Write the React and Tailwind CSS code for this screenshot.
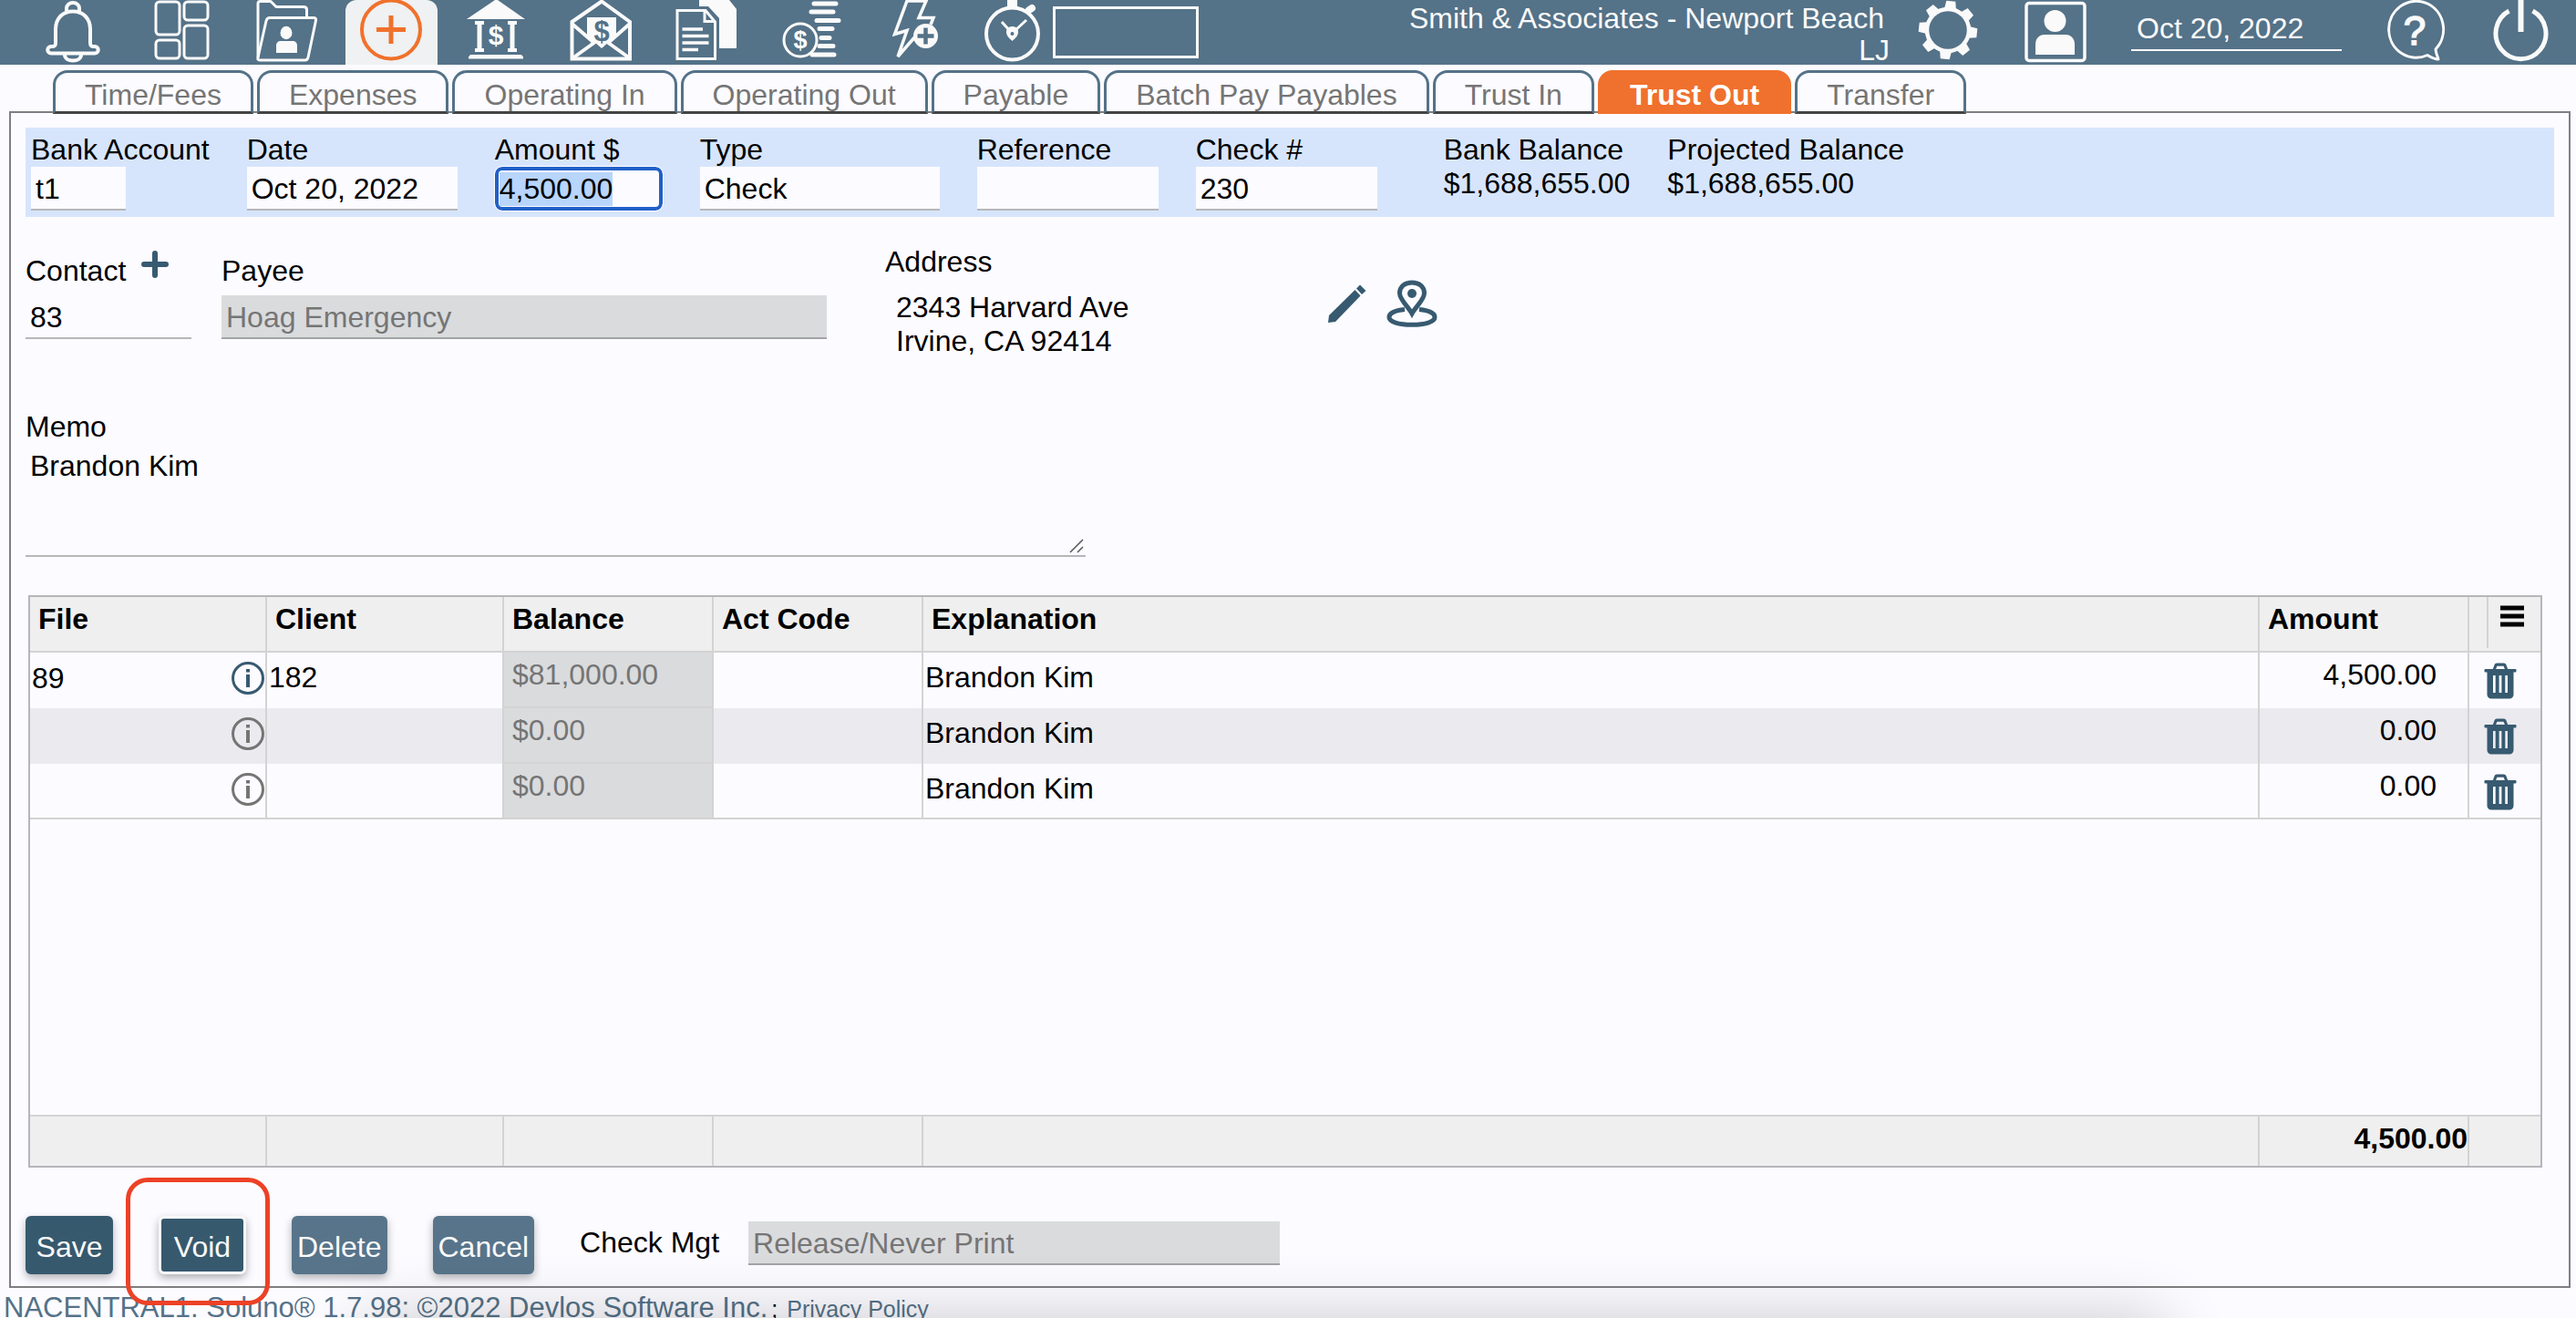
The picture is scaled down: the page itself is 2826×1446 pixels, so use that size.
import { useEffect, useRef, useState } from 'react';
import clsx from 'clsx';

const TABS = [
  'Time/Fees',
  'Expenses',
  'Operating In',
  'Operating Out',
  'Payable',
  'Batch Pay Payables',
  'Trust In',
  'Trust Out',
  'Transfer',
];

const ROWS = [
  { id: 1, file: '89', client: '182', balance: '$81,000.00', explanation: 'Brandon Kim', amount: '4,500.00' },
  { id: 2, file: '', client: '', balance: '$0.00', explanation: 'Brandon Kim', amount: '0.00' },
  { id: 3, file: '', client: '', balance: '$0.00', explanation: 'Brandon Kim', amount: '0.00' },
];

const fieldClass =
  'block h-12 appearance-none rounded-none border-b-2 border-[#b7b7ba] bg-[#fcfbff] pl-[5px] pt-0.5 leading-[37px] outline-none';
const disabledClass =
  'block h-12 appearance-none rounded-none border-b-2 border-[#a3a4a6] bg-[#dadbdd] pl-[5px] pt-0.5 leading-[37px] text-[#757575] outline-none disabled:opacity-100';
const cellInputClass = 'block w-full min-w-0 bg-transparent pl-0.5 leading-[37px] outline-none';

/* ---------- toolbar icons ---------- */

function BellIcon() {
  return (
    <svg viewBox="0 0 101 71" className="w-full h-full" fill="none" stroke="currentColor" strokeWidth="4" strokeLinecap="round" strokeLinejoin="round">
      <path d="M39 12V9a7 6 0 0 1 14 0v3" />
      <path d="M27 47V32C27 20 35 12.500 46 12.500S65 20 65 32V47c0 3 1 4 4 4h1a3.700 3.700 0 0 1 0 7.500H22a3.700 3.700 0 0 1 0-7.500h1c3 0 4-1 4-4z" />
      <path d="M37 60c0 4 4 6.500 9 6.500s9-2.500 9-6.500" />
    </svg>
  );
}

function DashboardIcon() {
  return (
    <svg viewBox="0 0 101 71" className="w-full h-full" fill="none" stroke="currentColor" strokeWidth="3">
      <rect x="22" y="2" width="26" height="36" rx="4" />
      <rect x="53" y="2" width="26" height="20" rx="4" />
      <rect x="22" y="44" width="26" height="20" rx="4" />
      <rect x="53" y="28" width="26" height="36" rx="4" />
    </svg>
  );
}

function ContactsFolderIcon() {
  return (
    <svg viewBox="0 0 101 71" className="w-full h-full" fill="none" stroke="currentColor" strokeWidth="3" strokeLinejoin="round">
      <path d="M19 63V4c0-1.500 1-2.500 2.500-2.500H33l6 6h30c2 0 3.500 1 3.500 3V18" />
      <path d="M32 19.500h48c2 0 3 1 2.500 3L74 63c-.4 2-1.500 3-3.500 3H21c-2 0-2.500-1-2-3l9-40c.5-2.300 1.700-3.500 4-3.500z" />
      <ellipse cx="50" cy="36" rx="6.500" ry="7.200" fill="currentColor" stroke="none" />
      <path d="M39 58v-8c0-3 2-5 5-5h13c3 0 5 2 5 5v8z" fill="currentColor" stroke="none" />
    </svg>
  );
}

function AddIcon() {
  return (
    <svg viewBox="0 0 101 71" className="w-full h-full" fill="none" stroke="#f0712c" strokeWidth="4">
      <circle cx="50" cy="32.500" r="32" />
      <path d="M34 32.500h32M50 17v31" strokeWidth="5" />
    </svg>
  );
}

function BankIcon() {
  return (
    <svg viewBox="0 0 101 71" className="w-full h-full" fill="currentColor">
      <path d="M50.500 -1L82 21H18z" />
      <path d="M22 60h56l2 2.500v2H20v-2z" />
      <path d="M27 23h10v4h-2.500v26H37v4H27v-4h2.500V27H27zM63 23h10v4h-2.500v26H73v4H63v-4h2.500V27H63z" />
      <text x="50" y="49" textAnchor="middle" fontSize="30" fontWeight="700">$</text>
    </svg>
  );
}

function EnvelopeIcon() {
  return (
    <svg viewBox="0 0 101 71" className="w-full h-full" fill="none" stroke="currentColor" strokeWidth="4">
      <path d="M18.500 24L51 1.500 82 24v40.500H18.500z" />
      <path d="M18.500 26L44 48M82 26L57 48M19 64l25-18M82 64L57 46" />
      <path d="M35 19h32v20L51 53 35 39z" fill="currentColor" stroke="none" />
      <text x="51" y="45" textAnchor="middle" fontSize="31" fontWeight="700" fill="#547288" stroke="none">$</text>
    </svg>
  );
}

function DocumentsIcon() {
  return (
    <svg viewBox="0 0 101 71" className="w-full h-full" fill="none" stroke="currentColor" strokeWidth="3">
      <path d="M43 0h33l8 10v43H65V20L53 7H43z" fill="currentColor" stroke="none" />
      <path d="M19 11.500h31L60.500 24v40.500H19z" />
      <path d="M49 12v11.500h12" />
      <path d="M24.500 32H47M24.500 39.500h29M24.500 47h29M24.500 54.500H42" strokeWidth="3.500" />
    </svg>
  );
}

function CoinsIcon() {
  return (
    <svg viewBox="0 0 101 71" className="w-full h-full" fill="none" stroke="currentColor" strokeWidth="5" strokeLinecap="round">
      <path d="M54 4h24M51 13h24M57 22.500h24M60 31.500h14M62 41.500h9M60 50.500h15M52 60h24" />
      <circle cx="39" cy="44" r="18" strokeWidth="3" fill="#547288" />
      <text x="39" y="53" textAnchor="middle" fontSize="27" fontWeight="700" fill="currentColor" stroke="none">$</text>
    </svg>
  );
}

function BoltPlusIcon() {
  return (
    <svg viewBox="0 0 101 71" className="w-full h-full" fill="none" stroke="currentColor" strokeWidth="3.500">
      <path d="M67 27l3-7.500H54L62 1H41L27.500 37.500 41 33.500 31 62l20-23" strokeLinejoin="miter" />
      <circle cx="61.500" cy="39.500" r="13.500" fill="currentColor" stroke="none" />
      <path d="M61.500 30.500v18M52.500 39.500h18" stroke="#547288" strokeWidth="4.500" />
    </svg>
  );
}

function StopwatchIcon() {
  return (
    <svg viewBox="0 0 86 71" className="w-full h-full" fill="none" stroke="currentColor" strokeWidth="4">
      <circle cx="41.500" cy="37" r="28.500" />
      <path d="M36 0h11v8H36z" fill="currentColor" stroke="none" />
      <path d="M60 11l3-2" strokeWidth="8" strokeLinecap="round" />
      <path d="M39 34l-9-10M44 34l13-12" strokeWidth="3" />
      <path d="M35 35c0-4 3-6 6.500-6s6.500 2 6.500 6-3 7-6.500 10C38 42 35 39 35 35z" fill="currentColor" stroke="none" />
      <circle cx="41.500" cy="37" r="2" fill="#547288" stroke="none" />
    </svg>
  );
}

function GearIcon() {
  return (
    <svg viewBox="0 0 72 71" className="w-[72px] h-full" fill="none" stroke="currentColor">
      <circle cx="36" cy="33" r="23" strokeWidth="4.500" />
      <g fill="currentColor" stroke="none">
        {[6, 51, 96, 141, 186, 231, 276, 321].map((angle) => (
          <path key={angle} d="M31 1h10l1.500 9h-13z" transform={`rotate(${angle} 36 33)`} />
        ))}
      </g>
    </svg>
  );
}

function ProfileIcon() {
  return (
    <svg viewBox="0 0 69 71" className="w-[69px] h-full" fill="none" stroke="currentColor" strokeWidth="3.500">
      <rect x="2" y="3.500" width="64" height="63" rx="3" />
      <circle cx="33.500" cy="23" r="12" fill="currentColor" stroke="none" />
      <path d="M12 60V49c0-7 4-11 10-11h23c6 0 10 4 10 11v11z" fill="currentColor" stroke="none" />
    </svg>
  );
}

function HelpIcon() {
  return (
    <svg viewBox="0 0 66 71" className="w-[66px] h-full" fill="none" stroke="currentColor" strokeWidth="3">
      <path d="M46 60.500A30 31 0 1 1 55 54c0 4 2 7 3 11-5 0-8-2-12-4.500z" strokeLinejoin="round" />
      <text x="32" y="49" textAnchor="middle" fontSize="44" fill="currentColor" strokeWidth="1.500">?</text>
    </svg>
  );
}

function PowerIcon() {
  return (
    <svg viewBox="0 0 68 71" className="w-[68px] h-full" fill="none" stroke="currentColor" strokeWidth="5">
      <path d="M21.500 12a27.500 28 0 1 0 26 0" />
      <path d="M34.500 0v35" strokeWidth="6" />
    </svg>
  );
}

/* ---------- form icons ---------- */

function InfoIcon() {
  return (
    <svg viewBox="0 0 38 38" className="size-[38px]" fill="none" stroke="currentColor" strokeWidth="3">
      <circle cx="19" cy="19" r="16.500" />
      <path d="M19 15v14M19 9v3.500" strokeWidth="4" />
    </svg>
  );
}

function TrashIcon() {
  return (
    <svg viewBox="0 0 36 40" className="w-9 h-10" fill="currentColor">
      <path d="M9.500 8l2-5.500c.4-1.200 1.400-2 2.800-2h7.400c1.400 0 2.400.8 2.800 2l2 5.500h-3.200L21.600 3.700h-7.200L12.700 8z" />
      <rect x="0.500" y="7" width="35" height="3.500" rx="1" />
      <path fillRule="evenodd" d="M3.500 10h29v25a4.500 4.500 0 0 1-4.500 4.500H8A4.500 4.500 0 0 1 3.500 35zM10 14v19h2.700V14zm6.600 0v19h2.800V14zm6.700 0v19H26V14z" />
    </svg>
  );
}

function PencilIcon() {
  return (
    <svg viewBox="0 0 42 42" className="size-[42px]" fill="currentColor">
      <path d="M29.500 6l6 6.500L8 41l-8 1 1-8z" />
      <path d="M31 4.500L35 .5l6.500 6.500-4.500 4z" />
    </svg>
  );
}

function MapPinIcon() {
  return (
    <svg viewBox="0 0 56 52" className="w-14 h-[52px]" fill="none" stroke="currentColor" strokeWidth="5">
      <path d="M20 32.500C9.500 33.500 3 36.500 3 41c0 5 10.500 8.300 25 8.300S53 46 53 41c0-4.500-6.500-7.500-17-8.500" />
      <path d="M28 37C23 28 14.500 22 14.500 14.500 14.500 7.500 20 3 28 3s13.500 4.500 13.500 11.500C41.500 22 33 28 28 37z" />
      <circle cx="28" cy="15" r="5" fill="currentColor" stroke="none" />
    </svg>
  );
}

const TOOLBAR = [
  { name: 'Notifications', icon: BellIcon },
  { name: 'Dashboard', icon: DashboardIcon },
  { name: 'Contacts', icon: ContactsFolderIcon },
  { name: 'New entry', icon: AddIcon, active: true },
  { name: 'Banking', icon: BankIcon },
  { name: 'Billing', icon: EnvelopeIcon },
  { name: 'Documents', icon: DocumentsIcon },
  { name: 'Payments', icon: CoinsIcon },
  { name: 'Quick add', icon: BoltPlusIcon },
];

function Header() {
  return (
    <header className="flex h-[71px] shrink-0 items-stretch bg-[#547288] pl-[34px] pr-[27px] text-[#fafafa]">
      <nav className="flex gap-3.5">
        {TOOLBAR.map((item) => (
          <button
            key={item.name}
            aria-label={item.name}
            className={clsx('w-[101px]', item.active && 'rounded-t-xl bg-[#eff1f2]')}
          >
            <item.icon />
          </button>
        ))}
        <button aria-label="Timer" className="w-[86px]">
          <StopwatchIcon />
        </button>
      </nav>
      <input aria-label="Timer value" className="mt-[7px] h-[57px] w-40 border-3 border-[#fafafa] bg-transparent px-2 outline-none" />

      <div className="ml-auto flex gap-12">
        <div className="flex gap-7">
          <div className="pt-[3px] text-right leading-[35px]">
            <p className="pr-1.5">Smith &amp; Associates - Newport Beach</p>
            <p>LJ</p>
          </div>
          <button aria-label="Settings"><GearIcon /></button>
        </div>
        <button aria-label="Profile"><ProfileIcon /></button>
        <input
          aria-label="Working date"
          defaultValue="Oct 20, 2022"
          className="h-14 w-[231px] border-b-2 border-[#fafafa] bg-transparent pl-1.5 pt-2 outline-none"
        />
        <button aria-label="Help"><HelpIcon /></button>
        <button aria-label="Log out"><PowerIcon /></button>
      </div>
    </header>
  );
}

function Tabs({ active, onChange }) {
  return (
    <div role="tablist" className="relative z-10 -mb-[3px] flex gap-1 pl-[58px] pt-1.5">
      {TABS.map((tab) => (
        <button
          key={tab}
          role="tab"
          aria-selected={tab === active}
          onClick={() => onChange(tab)}
          className={clsx(
            'h-12 rounded-t-2xl border-3 px-8 pt-1.5 leading-[37px]',
            tab === active
              ? 'border-[#f0702d] bg-[#f0702d] font-bold text-white'
              : 'border-[#547288] border-b-[#444444] bg-[#fcfbff] text-[#757575]'
          )}
        >
          {tab}
        </button>
      ))}
    </div>
  );
}

function PaymentBar() {
  const amountRef = useRef(null);

  useEffect(() => {
    amountRef.current.focus();
    amountRef.current.select();
  }, []);

  return (
    <div className="flex gap-[41px] bg-[#d7e5fc] pb-[7px] pl-1.5 pt-1.5 leading-[37px]">
      <div>
        <label htmlFor="bank" className="block">Bank Account</label>
        <input id="bank" defaultValue="t1" className={clsx(fieldClass, 'w-[104px]')} />
      </div>
      <div>
        <label htmlFor="date" className="block">Date</label>
        <input id="date" defaultValue="Oct 20, 2022" className={clsx(fieldClass, 'w-[231px]')} />
      </div>
      <div>
        <label htmlFor="amount" className="block">Amount $</label>
        <input
          id="amount"
          ref={amountRef}
          defaultValue="4,500.00"
          className="block h-12 w-[184px] rounded-lg border-4 border-[#2160c8] bg-[#fcfbff] pl-px leading-[37px] outline-1 outline-white selection:bg-[#b8d5fb] selection:text-black"
        />
      </div>
      <div>
        <label htmlFor="type" className="block">Type</label>
        <select id="type" className={clsx(fieldClass, 'w-[263px]')}>
          <option>Check</option>
        </select>
      </div>
      <div>
        <label htmlFor="reference" className="block">Reference</label>
        <input id="reference" className={clsx(fieldClass, 'w-[199px]')} />
      </div>
      <div>
        <label htmlFor="check-no" className="block">Check #</label>
        <input id="check-no" defaultValue="230" className={clsx(fieldClass, 'w-[199px]')} />
      </div>
      <div className="ml-8">
        <p>Bank Balance</p>
        <p>$1,688,655.00</p>
      </div>
      <div>
        <p>Projected Balance</p>
        <p>$1,688,655.00</p>
      </div>
    </div>
  );
}

function PayeeSection() {
  return (
    <div className="mt-[31px] flex leading-[37px]">
      <div className="mr-[33px] w-[182px] pt-2.5">
        <div className="flex">
          <label htmlFor="contact">Contact</label>
          <button aria-label="Add contact" className="-mt-1 ml-[17px] self-start text-[#375a70]">
            <svg viewBox="0 0 30 30" className="size-[30px]" stroke="currentColor" strokeWidth="6" strokeLinecap="round">
              <path d="M15 3v24M3 15h24" />
            </svg>
          </button>
        </div>
        <input id="contact" defaultValue="83" className={clsx(fieldClass, 'mt-2 w-full')} />
      </div>
      <div className="mr-16 w-[664px] pt-2.5">
        <label htmlFor="payee" className="block">Payee</label>
        <input id="payee" disabled defaultValue="Hoag Emergency" className={clsx(disabledClass, 'mt-2 w-full')} />
      </div>
      <div className="w-[486px]">
        <p>Address</p>
        <address className="mt-[13px] pl-3 not-italic">
          2343 Harvard Ave
          <br />
          Irvine, CA 92414
        </address>
      </div>
      <div className="flex items-center gap-[22px] self-start pt-[38px] text-[#375a70]">
        <button aria-label="Edit address"><PencilIcon /></button>
        <button aria-label="Show on map"><MapPinIcon /></button>
      </div>
    </div>
  );
}

function Memo() {
  return (
    <div className="mt-[57px] leading-[37px]">
      <label htmlFor="memo" className="block">Memo</label>
      <div className="relative w-[1163px]">
        <textarea
          id="memo"
          defaultValue="Brandon Kim"
          className="block h-[124px] w-full resize-none border-b-2 border-[#b7b7ba] bg-transparent pl-[5px] pt-1.5 outline-none"
        />
        <svg viewBox="0 0 16 16" className="absolute bottom-1 right-0.5 size-4" stroke="#555" strokeWidth="1.500">
          <path d="M1 15L15 1M9 15l6-6" />
        </svg>
      </div>
    </div>
  );
}

function AllocationTable() {
  const [rows, setRows] = useState(ROWS);
  const line = 'border-r-2 border-[#d3d3d3]';

  return (
    <div className="ml-[3px] mr-[13px] mt-[42px] border-2 border-[#b6b6ba]">
      <table className="w-full table-fixed border-separate border-spacing-0 leading-[37px]">
        <colgroup>
          <col className="w-[260px]" />
          <col className="w-[260px]" />
          <col className="w-[230px]" />
          <col className="w-[230px]" />
          <col />
          <col className="w-[230px]" />
          <col className="w-[78px]" />
        </colgroup>
        <thead>
          <tr className="h-[61px] bg-[#efefef] text-left align-top">
            {['File', 'Client', 'Balance', 'Act Code', 'Explanation', 'Amount'].map((head) => (
              <th key={head} className="border-b-2 border-r-2 border-[#d3d3d3] px-[9px] pt-1.5">{head}</th>
            ))}
            <th className="border-b-2 border-[#d3d3d3] pl-[19px]">
              <button aria-label="Columns" className="flex h-14 items-start border-l-2 border-[#d3d3d3] pl-3 pt-[9px]">
                <svg viewBox="0 0 28 24" className="h-6 w-7">
                  <path d="M1 3h26M1 12h26M1 21h26" stroke="black" strokeWidth="5" />
                </svg>
              </button>
            </th>
          </tr>
        </thead>
        <tbody>
          {rows.map((row, index) => {
            const bottom = index === rows.length - 1 && 'border-b-2';
            return (
              <tr key={row.id} className={clsx('h-[61px] align-top', index % 2 === 1 && 'bg-[#ebeaee]')}>
                <td className={clsx(line, bottom, 'pt-[9px]')}>
                  <div className="flex">
                    <input aria-label={`File ${row.id}`} defaultValue={row.file} className={cellInputClass} />
                    <button
                      aria-label={`File details ${row.id}`}
                      className={clsx('shrink-0', row.file ? 'text-[#375a70]' : 'text-[#757575]')}
                    >
                      <InfoIcon />
                    </button>
                  </div>
                </td>
                <td className={clsx(line, bottom, 'pt-[9px]')}>
                  <input aria-label={`Client ${row.id}`} defaultValue={row.client} className={cellInputClass} />
                </td>
                <td className={clsx(line, 'border-b-2 bg-[#dadbdd] pl-[9px] pt-1.5 text-[#757575]')}>{row.balance}</td>
                <td className={clsx(line, bottom, 'pt-[9px]')}>
                  <input aria-label={`Act code ${row.id}`} className={cellInputClass} />
                </td>
                <td className={clsx(line, bottom, 'pt-[9px]')}>
                  <input aria-label={`Explanation ${row.id}`} defaultValue={row.explanation} className={cellInputClass} />
                </td>
                <td className={clsx(line, bottom, 'pr-[34px] pt-1.5 text-right')}>{row.amount}</td>
                <td className={clsx(bottom, 'border-[#d3d3d3] pl-4 pt-[11px]')}>
                  <button
                    aria-label={`Delete row ${row.id}`}
                    className="block text-[#375a70]"
                    onClick={() => setRows(rows.filter((r) => r.id !== row.id))}
                  >
                    <TrashIcon />
                  </button>
                </td>
              </tr>
            );
          })}
          <tr className="h-[324px]">
            <td colSpan={7} />
          </tr>
        </tbody>
        <tfoot>
          <tr className="h-14 bg-[#efefef] align-top font-bold">
            {[1, 2, 3, 4, 5].map((n) => (
              <td key={n} className={clsx(line, 'border-t-2')} />
            ))}
            <td className={clsx(line, 'border-t-2 pt-1.5 text-right')}>4,500.00</td>
            <td className="border-t-2 border-[#d3d3d3]" />
          </tr>
        </tfoot>
      </table>
    </div>
  );
}

function Actions() {
  const button = 'h-16 min-w-24 rounded-md px-1.5 pt-1 leading-[37px] text-[#fafafa] shadow-[0_4px_10px_rgba(0,0,0,0.3)]';

  return (
    <div className="mt-[53px] flex items-start gap-[50px]">
      <button className={clsx(button, 'bg-[#36596e]')}>Save</button>
      <div className="relative">
        <button className={clsx(button, 'border-3 border-[#fafafa] bg-[#36596e]')}>Void</button>
        {/* highlight around the Void button */}
        <div className="pointer-events-none absolute -left-9 -top-[42px] h-[140px] w-[158px] rounded-3xl border-5 border-[#ed4126]" />
      </div>
      <button className={clsx(button, 'bg-[#57748a]')}>Delete</button>
      <button className={clsx(button, 'bg-[#57748a]')}>Cancel</button>
      <div className="flex gap-8 pt-1.5 leading-[46px]">
        <label htmlFor="check-mgt">Check Mgt</label>
        <select id="check-mgt" disabled className={clsx(disabledClass, 'w-[583px]')}>
          <option>Release/Never Print</option>
        </select>
      </div>
    </div>
  );
}

function App() {
  const [activeTab, setActiveTab] = useState('Trust Out');

  return (
    <div className="relative flex h-screen flex-col overflow-hidden bg-[#fcfbff] font-['Liberation_Sans',Arial,sans-serif] text-[32px] text-black">
      <Header />
      <Tabs active={activeTab} onChange={setActiveTab} />
      <main className="ml-2.5 mr-1.5 shrink-0 border-2 border-[#7f7f82] px-4 pb-[13px] pt-4">
        <PaymentBar />
        <PayeeSection />
        <Memo />
        <AllocationTable />
        <Actions />
      </main>
      <footer className="flex shrink-0 items-baseline whitespace-pre pl-1 pt-1 text-[31px] leading-9 text-[#547288]">
        <span>NACENTRAL1: Soluno® 1.7.98: ©2022 Devlos Software Inc.</span>
        <span className="ml-1 text-[25px] text-black">;</span>
        <a href="#privacy" className="ml-2.5 text-[25px] underline">Privacy Policy</a>
      </footer>
      <div className="pointer-events-none absolute left-[400px] right-[450px] top-full h-20 shadow-[0_0_70px_rgba(0,0,0,0.2)]" />
    </div>
  );
}

export default App;
